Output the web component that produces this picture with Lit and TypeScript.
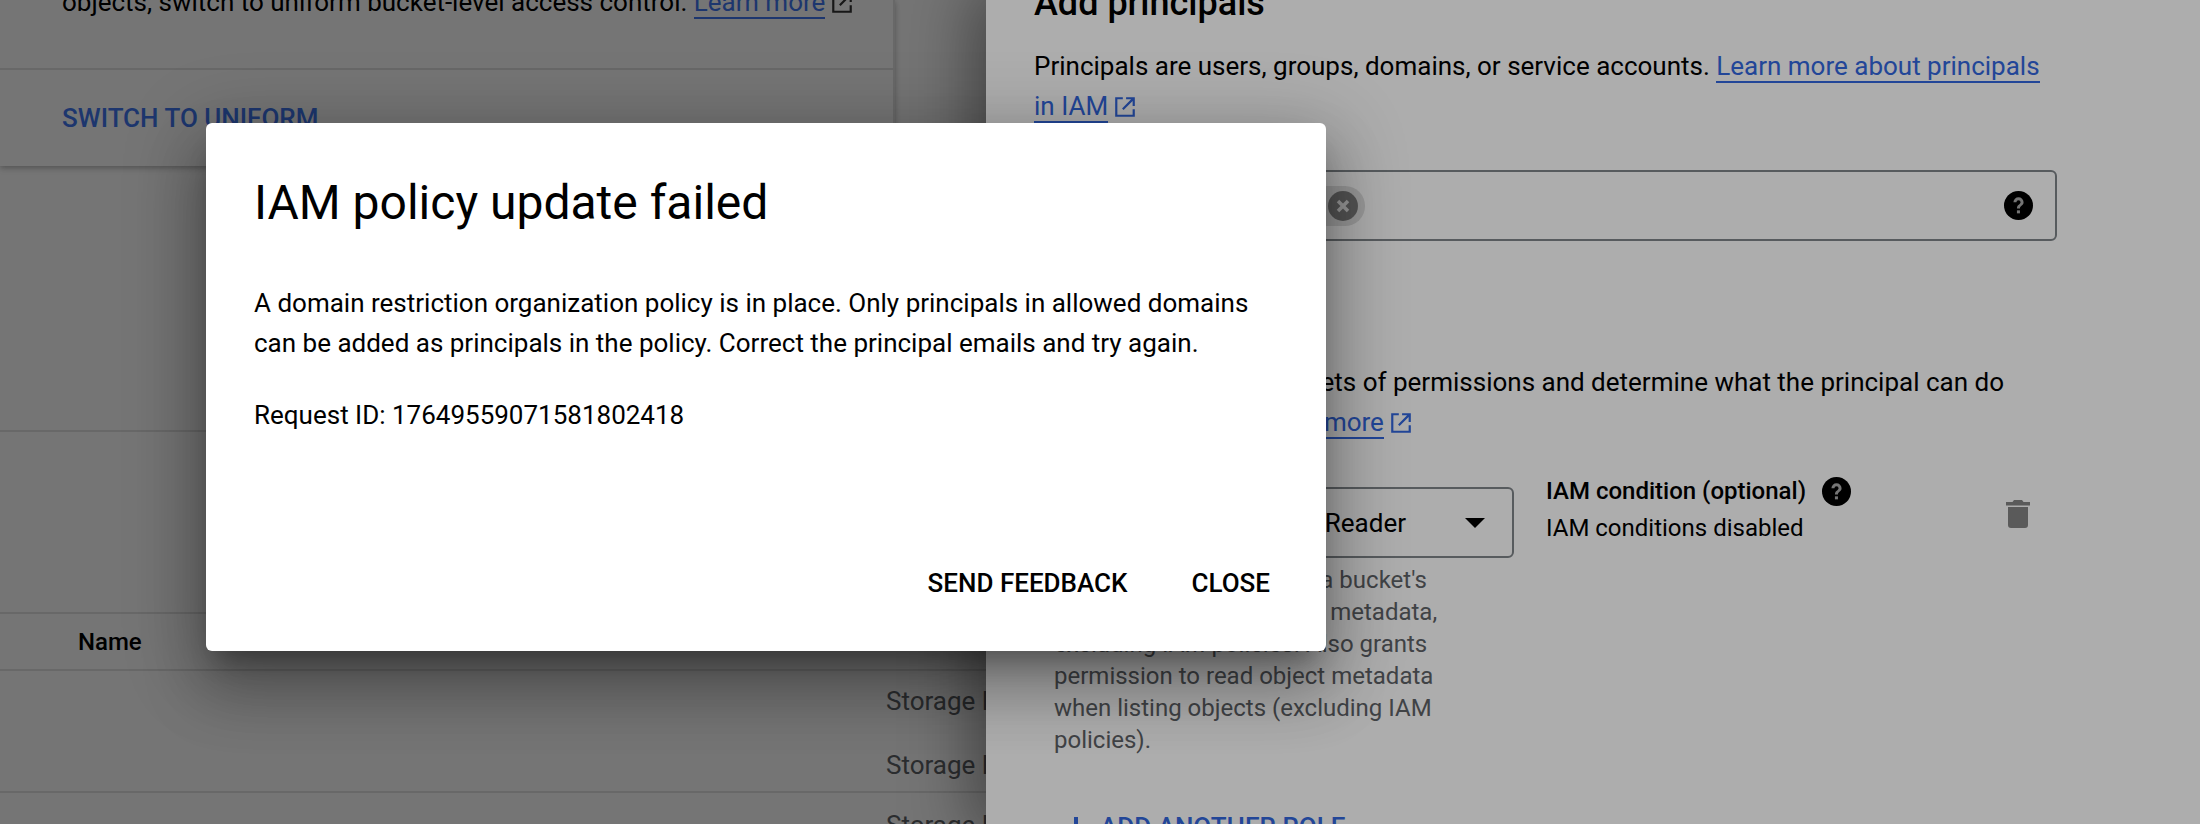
import { LitElement, css, html, svg } from 'lit';
import { customElement } from 'lit/decorators.js';

const helpIcon = svg`<circle cx="12" cy="12" r="12" fill="#000"/><path d="M7.800 9.300a4.200 4.200 0 0 1 8.400 0c0 2.800-3 2.900-3 5.200h-2.500c0-3.500 3-3.300 3-5.200a1.700 1.700 0 0 0-3.400 0z" fill="#adadad"/><rect x="10.700" y="16" width="2.500" height="2.500" fill="#adadad"/>`;

const externalIcon = svg`<path d="M2 2h7v2H4v14h14v-5h2v7H2z M12 2h8v8h-2V5.400l-8.300 8.300-1.400-1.400L16.600 4H12z" fill="currentColor"/>`;

@customElement('app-root')
export class AppRoot extends LitElement {
  static styles = css`
    :host {
      display: block;
      position: relative;
      width: 2200px;
      height: 824px;
      overflow: hidden;
      background: #fff;
      font-family: Roboto, 'Liberation Sans', sans-serif;
      font-size: 26px;
      color: #000;
    }

    a {
      color: #3367e0;
      text-decoration: none;
    }

    .link-text {
      border-bottom: 2px solid currentColor;
    }

    .ext {
      display: inline-block;
      width: 24px;
      height: 24px;
      margin-left: 5px;
      vertical-align: -4px;
    }

    .page {
      display: grid;
      grid-template-columns: 986px 1214px;
      height: 824px;
    }

    /* left: bucket page, sits under the side panel */
    .left {
      position: relative;
      overflow: hidden;
    }

    .left a {
      color: #4277f0;
    }

    .card {
      display: flow-root;
      width: 895px;
      height: 166px;
      box-sizing: border-box;
      border-right: 2px solid #e4e4e4;
      box-shadow: 0 2px 6px rgba(0, 0, 0, 0.3);
    }

    .card-text {
      padding-left: 62px;
      line-height: 40px;
      margin-top: -18px;
      height: 88px;
      box-sizing: border-box;
      border-bottom: 2px solid #e4e4e4;
      white-space: nowrap;
    }

    .card-text .ext {
      color: #333;
    }

    .card-action {
      padding: 30px 0 0 62px;
      font-weight: 500;
      line-height: 36px;
    }

    .rule {
      height: 2px;
      background: #e4e4e4;
    }

    .rule.first {
      margin-top: 264px;
    }

    .name-row {
      margin-top: 180px;
      height: 59px;
      box-sizing: border-box;
      padding-left: 78px;
      font-size: 24px;
      font-weight: 500;
      line-height: 57px;
      border-top: 2px solid #e4e4e4;
      border-bottom: 2px solid #e4e4e4;
    }

    .row-group {
      box-sizing: border-box;
      padding-left: 886px;
      white-space: nowrap;
      color: #5f6368;
    }

    .row-group.two {
      height: 122px;
      border-bottom: 2px solid #e4e4e4;
    }

    .row-group.two div {
      height: 64px;
      line-height: 60px;
    }

    .row-group.one {
      padding-top: 2px;
      line-height: 60px;
    }

    /* right: add principals panel */
    .panel {
      position: relative;
      box-sizing: border-box;
      padding-left: 48px;
      background: #fff;
      box-shadow: 0 0 64px 12px rgba(0, 0, 0, 0.45);
      overflow: hidden;
    }

    .panel h2 {
      margin: -19px 0 0;
      font-size: 36px;
      font-weight: 500;
      line-height: 44px;
    }

    .panel p {
      margin: 0;
      width: 1010px;
      line-height: 40px;
    }

    .panel p.intro {
      padding-top: 21px;
    }

    .input {
      display: flex;
      align-items: center;
      justify-content: flex-end;
      width: 1023px;
      height: 71px;
      box-sizing: border-box;
      margin-top: 44px;
      padding-right: 22px;
      border: 2px solid #80868b;
      border-radius: 6px;
    }

    .chip {
      position: absolute;
      left: 299px;
      top: 186px;
      width: 80px;
      height: 40px;
      border-radius: 20px;
      background: #e0e0e0;
    }

    .chip svg {
      position: absolute;
      right: 7px;
      top: 5px;
    }

    .panel p.roles-text {
      margin-top: 121px;
    }

    .role-row {
      display: flex;
      margin-top: 45px;
    }

    .role-col {
      width: 480px;
      flex: none;
    }

    .select {
      display: flex;
      align-items: center;
      justify-content: flex-end;
      gap: 59px;
      height: 71px;
      box-sizing: border-box;
      padding-right: 27px;
      border: 2px solid #80868b;
      border-radius: 6px;
      white-space: nowrap;
    }

    .arrow {
      width: 0;
      height: 0;
      border-left: 10px solid transparent;
      border-right: 10px solid transparent;
      border-top: 10px solid #000;
    }

    .hint {
      width: 400px;
      margin: 6px 0 0 20px;
      font-size: 24px;
      line-height: 32px;
      color: #5f6368;
    }

    .cond {
      width: 460px;
      flex: none;
      margin-left: 32px;
    }

    .cond-title {
      display: flex;
      align-items: center;
      gap: 16px;
      font-size: 24px;
      font-weight: 500;
      line-height: 36px;
      margin-top: -14px;
    }

    .cond-sub {
      margin-top: 1px;
      line-height: 36px;
      font-size: 24px;
    }

    .trash {
      margin-top: 13px;
      flex: none;
    }

    .add-role {
      display: flex;
      align-items: center;
      gap: 14px;
      margin: 56px 0 0 32px;
      font-weight: 500;
      color: #3367e0;
    }

    .scrim {
      position: absolute;
      inset: 0;
      background: rgba(0, 0, 0, 0.32);
    }

    .dialog {
      position: absolute;
      left: 206px;
      top: 123px;
      width: 1120px;
      height: 528px;
      box-sizing: border-box;
      display: flex;
      flex-direction: column;
      padding: 48px;
      background: #fff;
      border-radius: 6px;
      box-shadow: 0 38px 60px 5px rgba(0, 0, 0, 0.22), 0 14px 74px 13px rgba(0, 0, 0, 0.2),
        0 18px 24px -11px rgba(0, 0, 0, 0.3);
    }

    .dialog h1 {
      margin: 0;
      font-size: 48px;
      font-weight: 400;
      line-height: 64px;
    }

    .dialog p {
      margin: 0;
      line-height: 40px;
    }

    .msg {
      padding-top: 48px;
    }

    .req {
      padding-top: 32px;
    }

    .actions {
      display: flex;
      justify-content: flex-end;
      gap: 64px;
      margin-top: auto;
      padding: 0 8px 5px 0;
      font-weight: 500;
    }
  `;

  render() {
    return html`
      <div class="page">
        <section class="left">
          <div class="card">
            <div class="card-text">
              objects, switch to uniform bucket-level access control.
              <a href="#"><span class="link-text">Learn more</span></a
              ><svg class="ext" viewBox="0 0 22 22">${externalIcon}</svg>
            </div>
            <div class="card-action"><a href="#">SWITCH TO UNIFORM</a></div>
          </div>
          <div class="rule first"></div>
          <div class="name-row">Name</div>
          <div class="row-group two">
            <div>Storage Legacy</div>
            <div>Storage Legacy</div>
          </div>
          <div class="row-group one">Storage Legacy</div>
          <div class="scrim"></div>
        </section>
        <section class="panel">
          <h2>Add principals</h2>
          <p class="intro">
            Principals are users, groups, domains, or service accounts.
            <a href="#"><span class="link-text">Learn more about principals in IAM</span></a
            ><a href="#"><svg class="ext" viewBox="0 0 22 22">${externalIcon}</svg></a>
          </p>
          <div class="input">
            <svg width="29" height="29" viewBox="0 0 24 24">${helpIcon}</svg>
          </div>
          <div class="chip">
            <svg width="30" height="30" viewBox="0 0 24 24">
              <circle cx="12" cy="12" r="12" fill="#7d7d7d"/>
              <path d="M7 9l2-2 3 3 3-3 2 2-3 3 3 3-2 2-3-3-3 3-2-2 3-3z" fill="#e0e0e0"/>
            </svg>
          </div>
          <p class="roles-text">
            Roles are composed of sets of permissions and determine what the principal can do
            with this resource.
            <a href="#"><span class="link-text">Learn more</span></a
            ><a href="#"><svg class="ext" viewBox="0 0 22 22">${externalIcon}</svg></a>
          </p>
          <div class="role-row">
            <div class="role-col">
              <div class="select">
                <span>Storage Legacy Bucket Reader</span>
                <span class="arrow"></span>
              </div>
              <div class="hint">
                Grants permission to list a bucket's contents and read bucket metadata, excluding
                IAM policies. Also grants permission to read object metadata when listing objects
                (excluding IAM policies).
              </div>
            </div>
            <div class="cond">
              <div class="cond-title">
                IAM condition (optional)
                <svg width="29" height="29" viewBox="0 0 24 24">${helpIcon}</svg>
              </div>
              <div class="cond-sub">IAM conditions disabled</div>
            </div>
            <svg class="trash" width="24" height="28" viewBox="0 0 24 28">
              <path d="M8 0h8l1.500 2H24v3.500H0V2h6.500zM2 7h20v18a3 3 0 0 1-3 3H5a3 3 0 0 1-3-3z" fill="#858585"/>
            </svg>
          </div>
          <div class="add-role">
            <svg width="20" height="20" viewBox="0 0 20 20">
              <path d="M8 0h4v8h8v4h-8v8H8v-8H0V8h8z" fill="#3367e0"/>
            </svg>
            ADD ANOTHER ROLE
          </div>
        </section>
      </div>
      <div class="scrim"></div>
      <div class="dialog">
        <h1>IAM policy update failed</h1>
        <p class="msg">
          A domain restriction organization policy is in place. Only principals in allowed domains
          can be added as principals in the policy. Correct the principal emails and try again.
        </p>
        <p class="req">Request ID: 17649559071581802418</p>
        <div class="actions">
          <span>SEND FEEDBACK</span>
          <span>CLOSE</span>
        </div>
      </div>
    `;
  }
}
